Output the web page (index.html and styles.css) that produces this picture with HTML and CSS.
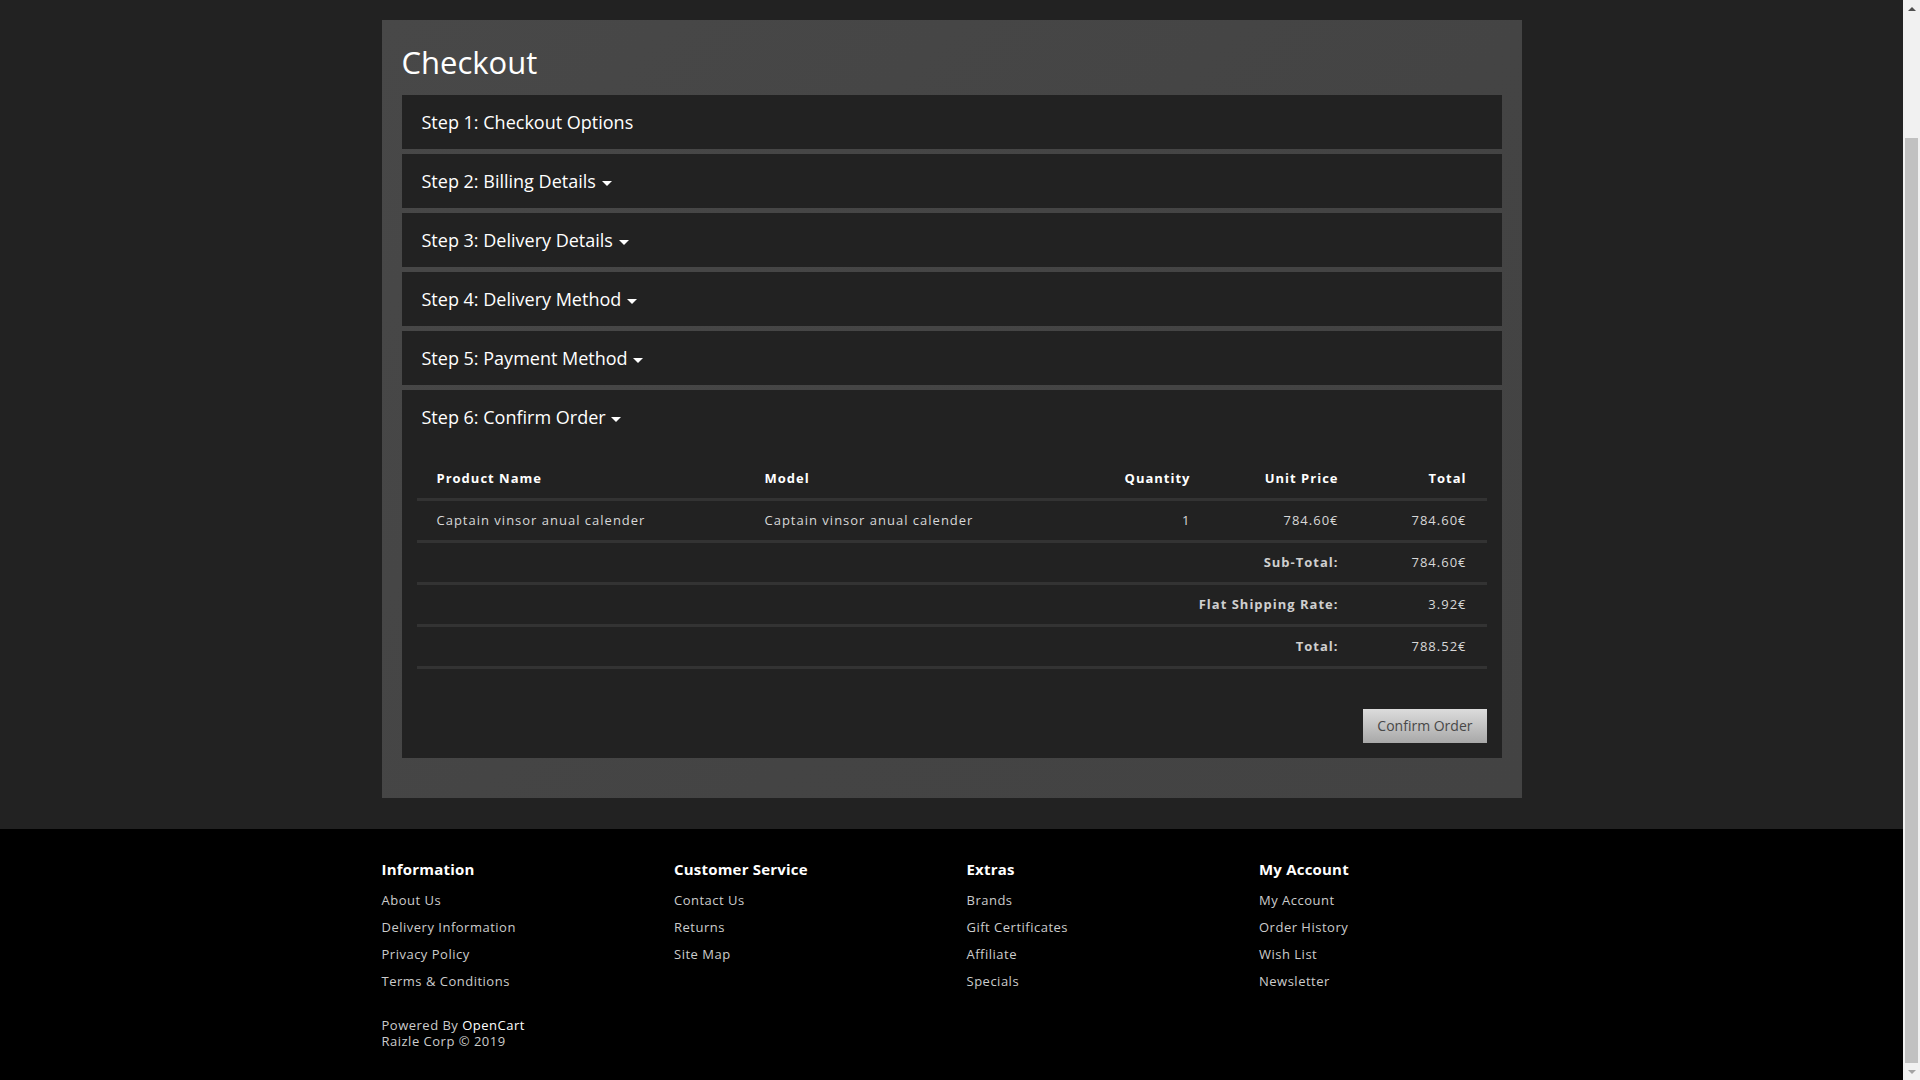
FILE: index.html
```html
<!DOCTYPE html>
<html lang="en">
<head>
<meta charset="utf-8">
<title>Checkout</title>
<link rel="stylesheet" href="styles.css">
</head>
<body>
<div class="viewport">
  <main class="page">
    <div class="checkout">
      <h1 class="title">Checkout</h1>
      <div class="steps">
        <div class="step"><div class="step-heading">Step 1: Checkout Options</div></div>
        <div class="step"><div class="step-heading">Step 2: Billing Details <span class="caret"></span></div></div>
        <div class="step"><div class="step-heading">Step 3: Delivery Details <span class="caret"></span></div></div>
        <div class="step"><div class="step-heading">Step 4: Delivery Method <span class="caret"></span></div></div>
        <div class="step"><div class="step-heading">Step 5: Payment Method <span class="caret"></span></div></div>
        <div class="step">
          <div class="step-heading">Step 6: Confirm Order <span class="caret"></span></div>
          <div class="step-body">
            <table class="order">
              <colgroup>
                <col class="c-name"><col class="c-model"><col class="c-qty"><col class="c-price"><col class="c-total">
              </colgroup>
              <thead>
                <tr>
                  <th class="left">Product Name</th>
                  <th class="left">Model</th>
                  <th class="right">Quantity</th>
                  <th class="right">Unit Price</th>
                  <th class="right">Total</th>
                </tr>
              </thead>
              <tbody>
                <tr>
                  <td class="left">Captain vinsor anual calender</td>
                  <td class="left">Captain vinsor anual calender</td>
                  <td class="right">1</td>
                  <td class="right">784.60€</td>
                  <td class="right">784.60€</td>
                </tr>
              </tbody>
              <tfoot>
                <tr>
                  <td colspan="4" class="right label">Sub-Total:</td>
                  <td class="right">784.60€</td>
                </tr>
                <tr>
                  <td colspan="4" class="right label">Flat Shipping Rate:</td>
                  <td class="right">3.92€</td>
                </tr>
                <tr>
                  <td colspan="4" class="right label">Total:</td>
                  <td class="right">788.52€</td>
                </tr>
              </tfoot>
            </table>
            <div class="actions"><button class="btn" type="button">Confirm Order</button></div>
          </div>
        </div>
      </div>
    </div>
  </main>
  <footer class="footer">
    <div class="footer-inner">
      <div class="cols">
        <div class="col">
          <h5>Information</h5>
          <ul>
            <li><a href="#">About Us</a></li>
            <li><a href="#">Delivery Information</a></li>
            <li><a href="#">Privacy Policy</a></li>
            <li><a href="#">Terms &amp; Conditions</a></li>
          </ul>
        </div>
        <div class="col">
          <h5>Customer Service</h5>
          <ul>
            <li><a href="#">Contact Us</a></li>
            <li><a href="#">Returns</a></li>
            <li><a href="#">Site Map</a></li>
          </ul>
        </div>
        <div class="col">
          <h5>Extras</h5>
          <ul>
            <li><a href="#">Brands</a></li>
            <li><a href="#">Gift Certificates</a></li>
            <li><a href="#">Affiliate</a></li>
            <li><a href="#">Specials</a></li>
          </ul>
        </div>
        <div class="col">
          <h5>My Account</h5>
          <ul>
            <li><a href="#">My Account</a></li>
            <li><a href="#">Order History</a></li>
            <li><a href="#">Wish List</a></li>
            <li><a href="#">Newsletter</a></li>
          </ul>
        </div>
      </div>
      <p class="powered">Powered By <a class="brand" href="#">OpenCart</a><br>Raizle Corp © 2019</p>
    </div>
  </footer>
</div>
<div class="scrollbar" aria-hidden="true">
  <div class="sb-arrow sb-up"></div>
  <div class="sb-track"><div class="sb-thumb"></div></div>
  <div class="sb-arrow sb-down"></div>
</div>
</body>
</html>
```
FILE: styles.css
```css
html, body {
  margin: 0;
  padding: 0;
}
body {
  display: flex;
  height: 100vh;
  overflow: hidden;
  background: #222222;
  font-family: "Open Sans", "DejaVu Sans", sans-serif;
  color: #dddddd;
}
.viewport {
  flex: 1;
  min-width: 0;
  overflow: hidden;
}
.page {
  padding: 20px 0 31px;
}
.checkout {
  width: 1140px;
  margin: 0 auto;
  box-sizing: border-box;
  padding: 20px;
  background: linear-gradient(135deg, #484848 0%, #444444 60%, #434343 100%);
}
.title {
  margin: 6px 0 16px;
  font-size: 31px;
  line-height: 33px;
  font-weight: 400;
  color: #ffffff;
}
.steps {
  display: flex;
  flex-direction: column;
  gap: 5px;
  margin-bottom: 20px;
}
.step {
  background: #222222;
}
.step-heading {
  padding: 0 20px;
  line-height: 54px;
  height: 54px;
  font-size: 18px;
  color: #ffffff;
}
.caret {
  display: inline-block;
  width: 0;
  height: 0;
  border-top: 5px solid #ffffff;
  border-left: 5px solid transparent;
  border-right: 5px solid transparent;
  vertical-align: middle;
  margin-left: 1px;
}
.step-body {
  padding: 15px;
}
.order {
  width: 100%;
  table-layout: fixed;
  border-collapse: separate;
  border-spacing: 0;
  font-size: 13px;
  letter-spacing: 1px;
}
.c-name { width: 328px; }
.c-model { width: 300px; }
.c-qty { width: 166px; }
.c-price { width: 148px; }
.c-total { width: 128px; }
.order th,
.order td {
  padding: 10px 20px;
  line-height: 19px;
  border-bottom: 3px solid #333333;
  white-space: nowrap;
}
.order th {
  font-weight: 700;
  color: #ffffff;
}
.order td {
  color: #d8d8d8;
}
.order td.label {
  font-weight: 700;
  color: #cfcfcf;
}
.left { text-align: left; }
.right { text-align: right; }
.actions {
  margin-top: 40px;
  display: flex;
  justify-content: flex-end;
}
.btn {
  font-family: "Open Sans", "DejaVu Sans", sans-serif;
  font-size: 14px;
  line-height: 20px;
  padding: 7px 14px;
  color: #484848;
  background: linear-gradient(#dcdcdc, #a8a8a8);
  border: 0;
  border-radius: 0;
  cursor: pointer;
}
.footer {
  background: #000000;
  padding: 30px 0 31px;
}
.footer-inner {
  width: 1170px;
  margin: 0 auto;
}
.cols {
  display: grid;
  grid-template-columns: repeat(4, 1fr);
}
.col {
  padding: 0 15px;
}
.col h5 {
  margin: 0 0 7.5px;
  font-size: 15px;
  line-height: 20px;
  font-weight: 700;
  color: #ffffff;
  letter-spacing: 0.2px;
}
.col ul {
  list-style: none;
  margin: 0;
  padding: 0;
}
.col li {
  font-size: 13px;
  line-height: 27px;
  letter-spacing: 0.5px;
}
.footer a {
  color: #cccccc;
  text-decoration: none;
}
.powered {
  margin: 22.5px 15px 0;
  font-size: 13px;
  line-height: 16px;
  letter-spacing: 0.5px;
  color: #cccccc;
}
.footer a.brand {
  color: #ffffff;
}
.scrollbar {
  flex: none;
  width: 17px;
  display: flex;
  flex-direction: column;
  background: #f1f1f1;
}
.sb-arrow {
  flex: none;
  height: 17px;
  display: flex;
  align-items: center;
  justify-content: center;
}
.sb-arrow::before {
  content: "";
  width: 0;
  height: 0;
  border-left: 4px solid transparent;
  border-right: 4px solid transparent;
}
.sb-up::before {
  border-bottom: 4px solid #505050;
}
.sb-down::before {
  border-top: 4px solid #a3a3a3;
}
.sb-track {
  flex: 1;
  display: flex;
  flex-direction: column;
  padding: 0 2px;
}
.sb-thumb {
  flex: 1;
  margin-top: 121px;
  background: #c1c1c1;
}
```
